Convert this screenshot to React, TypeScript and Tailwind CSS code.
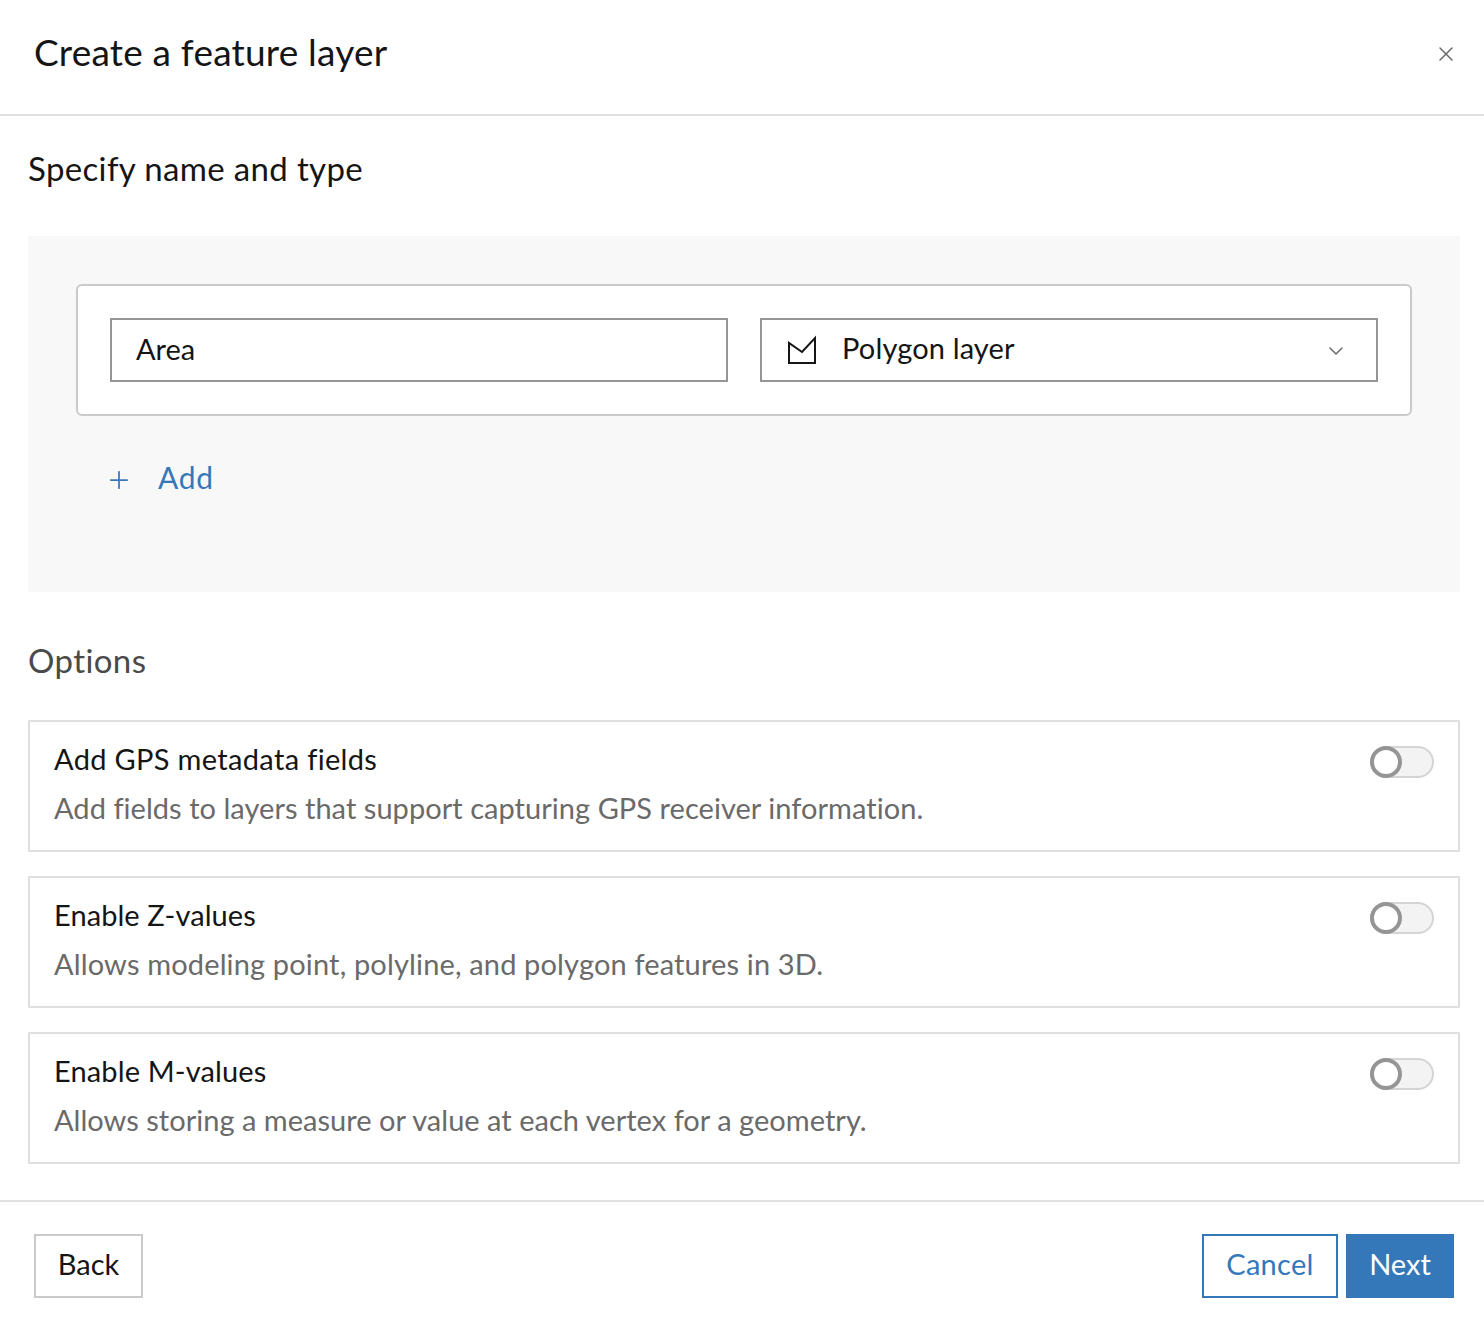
import { ChevronDown, Plus, X } from 'lucide-react'

const options = [
  {
    title: 'Add GPS metadata fields',
    titleClass: 'tracking-[0.33px]',
    text: 'Add fields to layers that support capturing GPS receiver information.',
    textClass: 'tracking-[0.04px]',
  },
  {
    title: 'Enable Z-values',
    titleClass: 'tracking-[0.07px]',
    text: 'Allows modeling point, polyline, and polygon features in 3D.',
    textClass: 'tracking-[0.15px]',
  },
  {
    title: 'Enable M-values',
    titleClass: 'tracking-[0.13px]',
    text: 'Allows storing a measure or value at each vertex for a geometry.',
    textClass: 'tracking-[0.02px]',
  },
]

function Toggle() {
  return (
    <div className="relative mt-[24px] h-[32px] w-[64px] rounded-full border-2 border-[#d4d4d4] bg-[#f3f3f3]">
      <div className="absolute -left-[2px] -top-[2px] h-[32px] w-[32px] rounded-full border-[4px] border-[#959595] bg-white" />
    </div>
  )
}

function PolygonIcon() {
  return (
    <svg width="32" height="32" viewBox="0 0 32 32" fill="none" stroke="#151515" strokeWidth="2">
      <path d="M3 9V29H29V4L16 18L3 9Z" />
    </svg>
  )
}

export default function App() {
  return (
    <div className="flex h-[1320px] w-[1484px] flex-col bg-white font-['Lato',sans-serif] text-[#151515] [font-variant-ligatures:none]">
      <div className="flex h-[116px] shrink-0 items-center justify-between border-b-2 border-[#e0e0e0] pl-[34px] pr-[26px]">
        <h1 className="pb-[10px] text-[37px] leading-[46px] tracking-[0.2px]">Create a feature layer</h1>
        <X size={24} strokeWidth={1.5} className="mb-[6px] text-[#6a6a6a]" />
      </div>

      <div className="flex flex-col pl-[28px] pr-[24px]">
        <h2 className="mt-[30px] h-[44px] text-[33px] leading-[44px] tracking-[0.35px]">Specify name and type</h2>

        <div className="mt-[46px] flex h-[356px] flex-col bg-[#f8f8f8] p-[48px]">
          <div className="grid h-[132px] grid-cols-2 gap-[32px] rounded-[6px] border-2 border-[#cacaca] bg-white p-[32px]">
            <div className="flex h-[64px] items-center border-2 border-[#959595] pb-[2px] pl-[24px] text-[29px]">
              Area
            </div>
            <div className="flex h-[64px] items-center border-2 border-[#959595] pl-[24px] pr-[28px] text-[29px]">
              <PolygonIcon />
              <span className="ml-[24px] flex-1 pb-[4px] tracking-[0.15px]">Polygon layer</span>
              <ChevronDown size={24} strokeWidth={1.5} className="mt-[2px] text-[#6a6a6a]" />
            </div>
          </div>
          <div className="mt-[40px] flex h-[44px] items-center pl-[29px] text-[#3578ba]">
            <Plus size={28} strokeWidth={1.5} className="mt-[4px]" />
            <span className="ml-[25px] pb-[2px] text-[30px] tracking-[0.7px]">Add</span>
          </div>
        </div>

        <h2 className="mt-[46px] h-[44px] text-[33px] leading-[44px] tracking-[0.4px] text-[#4a4a4a]">Options</h2>

        <div className="mt-[38px] flex flex-col gap-[24px]">
          {options.map((o) => (
            <div
              key={o.title}
              className="flex h-[132px] items-start justify-between border-2 border-[#dfdfdf] pl-[24px] pr-[24px]"
            >
              <div>
                <div className={`mt-[19px] h-[36px] text-[29px] leading-[36px] ${o.titleClass}`}>{o.title}</div>
                <div className={`mt-[13px] h-[36px] text-[29px] leading-[36px] text-[#6a6a6a] ${o.textClass}`}>
                  {o.text}
                </div>
              </div>
              <Toggle />
            </div>
          ))}
        </div>
      </div>

      <div className="mt-[36px] flex h-[120px] items-start justify-between border-t-2 border-[#e0e0e0] pl-[34px] pr-[30px] pt-[32px] text-[29px]">
        <button className="h-[64px] w-[109px] border-2 border-[#cacaca] bg-white pb-[4px]">Back</button>
        <div className="flex gap-[8px]">
          <button className="h-[64px] w-[136px] border-2 border-[#3578ba] bg-white pb-[4px] tracking-[0.3px] text-[#3578ba]">
            Cancel
          </button>
          <button className="h-[64px] w-[108px] bg-[#3578ba] pb-[4px] text-white">Next</button>
        </div>
      </div>
    </div>
  )
}
